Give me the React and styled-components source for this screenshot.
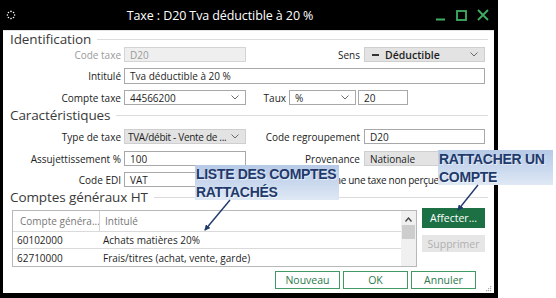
import React from "react";
import styled, { createGlobalStyle } from "styled-components";

const Global = createGlobalStyle`
  html, body { margin: 0; padding: 0; background: #fff; }
  body { font-family: "Open Sans", "Noto Sans", sans-serif; }
  * { box-sizing: border-box; }
`;

const Page = styled.div`
  position: relative;
  width: 556px;
  height: 298px;
  overflow: hidden;
  background: #fff;
  display: flex;
`;

const Window = styled.div`
  width: 498px;
  height: 298px;
  background: #000;
  display: flex;
  flex-direction: column;
  padding: 0 4px 5px 3px;
`;

const TitleBar = styled.div`
  height: 30px;
  flex-shrink: 0;
  display: flex;
  align-items: center;
  color: #fff;
`;

const AppIcon = styled.svg`
  width: 10px;
  height: 10px;
  margin: 0 0 0 3px;
  flex-shrink: 0;
`;

const Title = styled.div`
  flex: 1;
  text-align: center;
  font-size: 12.5px;
  padding-right: 6px;
  white-space: nowrap;
  letter-spacing: -0.1px;
`;

const Controls = styled.div`
  width: 64px;
  display: flex;
  align-items: center;
  justify-content: space-between;
  padding: 0 5px 0 6px;
`;

const Body = styled.div`
  position: relative;
  flex: 1;
  background: #fff;
  display: flex;
  flex-direction: column;
  border-top: 1px solid #e4e4e4;
`;

const SectionHeader = styled.div`
  height: ${(p) => p.$h}px;
  display: flex;
  align-items: center;
  padding: 0 6px 0 7px;
  font-size: 13.5px;
  color: #3a3a3a;
  letter-spacing: -0.1px;
  &::after {
    content: "";
    flex: 1;
    height: 1px;
    background: #dcdcdc;
    margin-left: 6px;
  }
`;

const Row = styled.div`
  display: flex;
  align-items: center;
  height: 15px;
  margin-top: ${(p) => p.$mt || 0}px;
`;

const Label = styled.div`
  width: ${(p) => p.$w}px;
  text-align: right;
  font-size: 10px;
  color: ${(p) => (p.$muted ? "#9a9a9a" : "#222")};
  margin-right: ${(p) => (p.$gap ?? 3)}px;
  white-space: nowrap;
`;

const Field = styled.div`
  width: ${(p) => p.$w}px;
  height: ${(p) => p.$h || 15}px;
  margin-right: ${(p) => p.$mr || 0}px;
  border: 1px solid
    ${(p) => (p.$variant === "disabled" ? "#d4d4d4" : p.$variant === "gray" ? "#cfcfcf" : "#a8a8a8")};
  background: ${(p) => (p.$variant === "disabled" ? "#efefef" : p.$variant === "gray" ? "#e3e3e3" : "#fff")};
  color: ${(p) => (p.$variant === "disabled" ? "#9a9a9a" : "#1e1e1e")};
  font-size: 10px;
  display: flex;
  align-items: center;
  padding: 0 6px 0 5px;
  white-space: nowrap;
  overflow: hidden;
`;

const FieldText = styled.span`
  flex: 1;
  overflow: hidden;
  font-weight: ${(p) => (p.$strong ? 600 : 400)};
  font-size: ${(p) => (p.$strong ? 10.5 : 10)}px;
  letter-spacing: ${(p) => (p.$tight ? -0.3 : 0)}px;
  margin-left: ${(p) => (p.$tight ? -2 : 0)}px;
`;

const Dash = styled.span`
  width: 7px;
  height: 2px;
  background: #333;
  margin: 0 6px 0 2px;
`;

const Chevron = () => (
  <svg width="8" height="5" viewBox="0 0 8 5" style={{ flexShrink: 0 }}>
    <polyline points="0.5,0.5 4,4 7.5,0.5" fill="none" stroke="#6a6a6a" strokeWidth="1" />
  </svg>
);

const CheckLine = styled.div`
  display: flex;
  align-items: center;
  margin-left: 50px;
  font-size: 10px;
  letter-spacing: -0.3px;
  color: #222;
  white-space: nowrap;
`;

const CheckBox = styled.span`
  width: 11px;
  height: 11px;
  border: 1px solid #888;
  background: #fff;
  margin-right: 4px;
`;

const TableArea = styled.div`
  display: flex;
  margin: 3px 0 0 9px;
  height: 57px;
`;

const Table = styled.div`
  width: 405px;
  border: 1px solid #b8b8b8;
  display: flex;
`;

const Grid = styled.div`
  flex: 1;
  display: flex;
  flex-direction: column;
`;

const TRow = styled.div`
  display: grid;
  grid-template-columns: 87px 1fr;
  height: ${(p) => p.$h}px;
  align-items: center;
  border-bottom: ${(p) => (p.$last ? "none" : "1px solid #dadada")};
  font-size: 10px;
  color: ${(p) => (p.$head ? "#777" : "#1e1e1e")};
`;

const Cell = styled.div`
  padding-left: ${(p) => p.$pl}px;
  height: 100%;
  display: flex;
  align-items: center;
  white-space: nowrap;
  overflow: hidden;
  border-right: ${(p) => (p.$div ? "1px solid #d4d4d4" : "none")};
`;

const ScrollBar = styled.div`
  width: 15px;
  background: #f0f0f0;
  display: flex;
  flex-direction: column;
  align-items: center;
  padding-top: 6px;
`;

const Thumb = styled.div`
  width: 13px;
  height: 14px;
  background: #cdcdcd;
  margin-top: 3px;
`;

const SideButtons = styled.div`
  display: flex;
  flex-direction: column;
  gap: 7px;
  margin: -2px 0 0 5px;
`;

const PrimaryButton = styled.div`
  width: 63px;
  height: 20px;
  background: #1d7044;
  color: #fff;
  font-size: 10.5px;
  display: flex;
  align-items: center;
  justify-content: center;
`;

const DisabledButton = styled.div`
  width: 63px;
  height: 17px;
  background: #e6e6e6;
  color: #b0b0b0;
  font-size: 10.5px;
  display: flex;
  align-items: center;
  justify-content: center;
`;

const Footer = styled.div`
  display: flex;
  justify-content: flex-end;
  gap: 3px;
  margin-top: 4px;
  padding-right: 18px;
`;

const OutlineButton = styled.div`
  width: 65px;
  height: 18px;
  border: 1px solid #3f9a64;
  color: #2a7a4c;
  background: #fff;
  font-size: 10.5px;
  display: flex;
  align-items: center;
  justify-content: center;
`;

const Grip = styled.svg`
  position: absolute;
  right: 2px;
  bottom: 1px;
`;

const Callout = styled.div`
  position: absolute;
  left: ${(p) => p.$x}px;
  top: ${(p) => p.$y}px;
  width: ${(p) => p.$w}px;
  height: ${(p) => p.$h}px;
  background: linear-gradient(180deg, #b6c9e6 0%, #cddbef 60%, #dfe8f4 100%);
  color: #1f3a6b;
  font-family: "Liberation Sans", Arial, sans-serif;
  font-weight: 700;
  font-size: 14px;
  line-height: 18px;
  letter-spacing: -0.3px;
  padding-left: 1px;
  text-shadow: 1px 1px 0 rgba(255, 255, 255, 0.55);
  white-space: nowrap;
`;

const Arrows = styled.svg`
  position: absolute;
  left: 0;
  top: 0;
  pointer-events: none;
`;

export default function App() {
  return (
    <>
      <Global />
      <Page>
        <Window>
          <TitleBar>
            <AppIcon viewBox="0 0 10 10">
              {Array.from({ length: 8 }).map((_, i) => {
                const a = (i * Math.PI) / 4;
                return <circle key={i} cx={5 + 3.6 * Math.cos(a)} cy={5 + 3.6 * Math.sin(a)} r="0.8" fill="#fff" />;
              })}
            </AppIcon>
            <Title>Taxe : D20 Tva déductible à 20 %</Title>
            <Controls>
              <svg width="9" height="12" viewBox="0 0 9 12">
                <line x1="0" y1="10.5" x2="9" y2="10.5" stroke="#3fae62" strokeWidth="2" />
              </svg>
              <svg width="11" height="11" viewBox="0 0 11 11">
                <rect x="1" y="1" width="9" height="9" fill="none" stroke="#3fae62" strokeWidth="1.8" />
              </svg>
              <svg width="12" height="12" viewBox="0 0 12 12">
                <path d="M1 1 L11 11 M11 1 L1 11" stroke="#3fae62" strokeWidth="1.8" />
              </svg>
            </Controls>
          </TitleBar>
          <Body>
            <SectionHeader $h={16}>Identification</SectionHeader>
            <Row>
              <Label $w={118} $muted>Code taxe</Label>
              <Field $w={122} $variant="disabled">D20</Field>
              <Label $w={114} $gap={4}>Sens</Label>
              <Field $w={121} $variant="gray">
                <Dash />
                <FieldText $strong>Déductible</FieldText>
                <Chevron />
              </Field>
            </Row>
            <Row $mt={6}>
              <Label $w={118}>Intitulé</Label>
              <Field $w={361} $h={16}>Tva déductible à 20 %</Field>
            </Row>
            <Row $mt={7}>
              <Label $w={118}>Compte taxe</Label>
              <Field $w={122}>
                <FieldText>44566200</FieldText>
                <Chevron />
              </Field>
              <Label $w={40}>Taux</Label>
              <Field $w={67} $mr={2}>
                <FieldText>%</FieldText>
                <Chevron />
              </Field>
              <Field $w={50}>20</Field>
            </Row>
            <SectionHeader $h={20}>Caractéristiques</SectionHeader>
            <Row $mt={4}>
              <Label $w={118}>Type de taxe</Label>
              <Field $w={122} $variant="gray">
                <FieldText $tight>TVA/débit - Vente de ...</FieldText>
                <Chevron />
              </Field>
              <Label $w={114} $gap={4}>Code regroupement</Label>
              <Field $w={121}>D20</Field>
            </Row>
            <Row $mt={7}>
              <Label $w={118}>Assujettissement %</Label>
              <Field $w={122}>100</Field>
              <Label $w={114} $gap={4}>Provenance</Label>
              <Field $w={121} $variant="gray">
                <FieldText>Nationale</FieldText>
                <Chevron />
              </Field>
            </Row>
            <Row $mt={6}>
              <Label $w={118}>Code EDI</Label>
              <Field $w={122}>VAT</Field>
              <CheckLine>
                <CheckBox />
                Comme une taxe non perçue
              </CheckLine>
            </Row>
            <SectionHeader $h={20}>Comptes généraux HT</SectionHeader>
            <TableArea>
              <Table>
                <Grid>
                  <TRow $h={21} $head>
                    <Cell $pl={7} $div>Compte généra...</Cell>
                    <Cell $pl={5}>Intitulé</Cell>
                  </TRow>
                  <TRow $h={17}>
                    <Cell $pl={4}>60102000</Cell>
                    <Cell $pl={3}>Achats matières 20%</Cell>
                  </TRow>
                  <TRow $h={17} $last>
                    <Cell $pl={4}>62710000</Cell>
                    <Cell $pl={3}>Frais/titres (achat, vente, garde)</Cell>
                  </TRow>
                </Grid>
                <ScrollBar>
                  <svg width="7" height="5" viewBox="0 0 7 5">
                    <polyline points="0.5,4.5 3.5,1 6.5,4.5" fill="none" stroke="#444" strokeWidth="1.3" />
                  </svg>
                  <Thumb />
                </ScrollBar>
              </Table>
              <SideButtons>
                <PrimaryButton>Affecter...</PrimaryButton>
                <DisabledButton>Supprimer</DisabledButton>
              </SideButtons>
            </TableArea>
            <Footer>
              <OutlineButton>Nouveau</OutlineButton>
              <OutlineButton>OK</OutlineButton>
              <OutlineButton>Annuler</OutlineButton>
            </Footer>
            <Grip width="6" height="6" viewBox="0 0 6 6">
              <rect x="4" y="0" width="1.2" height="1.2" fill="#aaa" />
              <rect x="2" y="2" width="1.2" height="1.2" fill="#aaa" />
              <rect x="4" y="2" width="1.2" height="1.2" fill="#aaa" />
              <rect x="0" y="4" width="1.2" height="1.2" fill="#aaa" />
              <rect x="2" y="4" width="1.2" height="1.2" fill="#aaa" />
              <rect x="4" y="4" width="1.2" height="1.2" fill="#aaa" />
            </Grip>
          </Body>
        </Window>
        <Callout $x={195} $y={165} $w={144} $h={35}>
          LISTE DES COMPTES
          <br />
          RATTACHÉS
        </Callout>
        <Callout $x={438} $y={150} $w={115} $h={35}>
          RATTACHER UN
          <br />
          COMPTE
        </Callout>
        <Arrows width="556" height="298" viewBox="0 0 556 298">
          <defs>
            <marker id="ah" markerWidth="6" markerHeight="6" refX="5" refY="3" orient="auto" markerUnits="userSpaceOnUse">
              <path d="M0,0 L6,3 L0,6 Z" fill="#1f3a6b" />
            </marker>
          </defs>
          <line x1="230" y1="200" x2="205" y2="230" stroke="#1f3a6b" strokeWidth="1.4" markerEnd="url(#ah)" />
          <line x1="478" y1="185" x2="458" y2="210" stroke="#1f3a6b" strokeWidth="1.4" markerEnd="url(#ah)" />
        </Arrows>
      </Page>
    </>
  );
}
